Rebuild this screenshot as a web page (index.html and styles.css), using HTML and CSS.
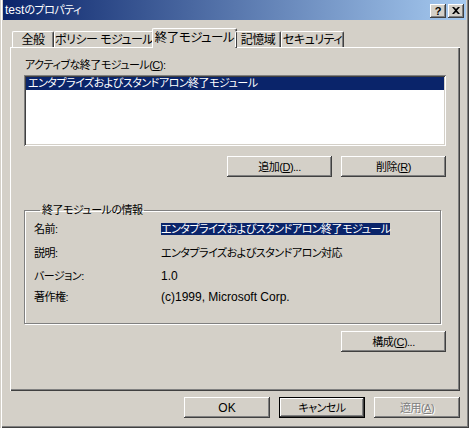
FILE: index.html
```html
<!DOCTYPE html>
<html>
<head>
<meta charset="utf-8">
<title>testのプロパティ</title>
<link rel="stylesheet" href="styles.css">
</head>
<body>
<div class="window">
  <div class="titlebar">
    <span class="title"><span class="en">test</span>のプロパティ</span>
    <div class="caption-btns">
      <span class="cap-btn help">?</span>
      <span class="cap-btn close">
        <svg width="8" height="7" viewBox="0 0 8 7"><path d="M0 0h2l2 2 2-2h2L5 3.5 8 7H6L4 5 2 7H0l3-3.5z" fill="#000"/></svg>
      </span>
    </div>
  </div>

  <div class="content">
    <div class="tabs">
      <div class="tab t1">全般</div>
      <div class="tab t2">ポリシー モジュール</div>
      <div class="tab t3 active">終了モジュール</div>
      <div class="tab t4">記憶域</div>
      <div class="tab t5">セキュリティ</div>
    </div>

    <div class="page">
      <div class="label">アクティブな終了モジュール(<u>C</u>):</div>
      <div class="listbox">
        <div class="item selected">エンタプライズおよびスタンドアロン終了モジュール</div>
      </div>
      <div class="btn-row">
        <span class="btn">追加(<u>D</u>)...</span>
        <span class="btn">削除(<u>R</u>)</span>
      </div>

      <fieldset class="group">
        <legend>終了モジュールの情報</legend>
        <div class="info">
          <span>名前:</span><span><span class="hl">エンタプライズおよびスタンドアロン終了モジュール</span></span>
          <span>説明:</span><span>エンタプライズおよびスタンドアロン対応</span>
          <span>バージョン:</span><span class="en">1.0</span>
          <span>著作権:</span><span class="en">(c)1999, Microsoft Corp.</span>
        </div>
      </fieldset>

      <div class="btn-row config">
        <span class="btn">構成(<u>C</u>)...</span>
      </div>
    </div>

    <div class="footer">
      <span class="btn wide en">OK</span>
      <span class="btn wide default">キャンセル</span>
      <span class="btn wide disabled">適用(<u>A</u>)</span>
    </div>
  </div>
</div>
</body>
</html>
```

FILE: styles.css
```css
html, body {
   margin: 0;
   padding: 0;
   background: #d4d0c8;
}

body {
   font-family: "Liberation Sans", "Noto Sans CJK JP", sans-serif;
   font-size: 11px;
   letter-spacing: -0.5px;
   line-height: 14px;
   color: #000;
   font-feature-settings: "palt";
   white-space: nowrap;
}

.en {
   font-size: 12px;
   letter-spacing: 0;
}

.window {
   width: 469px;
   height: 428px;
   box-sizing: border-box;
   padding: 0 3px 3px 3px;
   background: #d4d0c8;
   box-shadow: inset 1px 0 #d4d0c8, inset 2px 0 #fff,
               inset -1px -1px #404040, inset -2px -2px #808080;
}

.titlebar {
   height: 20px;
   display: flex;
   align-items: center;
   justify-content: space-between;
   padding: 0 2px 0 2px;
   background: linear-gradient(to right, #0a246a, #a6caf0);
}

.title {
   color: #fff;
}

.caption-btns {
   display: flex;
   gap: 2px;
   padding-top: 1px;
}

.cap-btn {
   width: 16px;
   height: 14px;
   display: flex;
   align-items: center;
   justify-content: center;
   background: #d4d0c8;
   box-shadow: inset -1px -1px #404040, inset 1px 1px #fff,
               inset -2px -2px #808080;
   font-family: "Liberation Sans", sans-serif;
   font-weight: bold;
   font-size: 11px;
   letter-spacing: 0;
}

.content {
   padding: 8px 6px 0 7px;
}

.tabs {
   height: 19px;
   display: flex;
   align-items: flex-end;
   padding-left: 2px;
   position: relative;
   z-index: 1;
}

.tab {
   height: 16px;
   box-sizing: border-box;
   text-align: center;
   line-height: 16px;
   border-top: 1px solid #fff;
   border-left: 1px solid #fff;
   border-right: 1px solid #404040;
   box-shadow: inset -1px 0 #808080;
   border-radius: 2px 2px 0 0;
   font-size: 12px;
}

.t1 { width: 42px; }
.t2 { width: 100px; }
.t4 { width: 46px; }
.t5 { width: 63px; }

.tab.active {
   width: 85px;
   height: 20px;
   margin: 0 -2px -1px -2px;
   line-height: 18px;
   background: #d4d0c8;
   font-size: 12.5px;
}

.page {
   height: 344px;
   box-sizing: border-box;
   padding: 11px 14px 0 14px;
   box-shadow: inset 1px 1px #fff, inset -1px -1px #404040,
               inset -2px -2px #808080;
}

.label {
   padding-left: 1px;
}

.listbox {
   margin-top: 3px;
   height: 71px;
   box-sizing: border-box;
   padding: 2px;
   background: #fff;
   box-shadow: inset 1px 1px #808080, inset -1px -1px #fff,
               inset 2px 2px #404040, inset -2px -2px #d4d0c8;
}

.item {
   height: 13px;
   line-height: 13px;
   padding-left: 2px;
}

.selected {
   background: #0a246a;
   color: #fff;
}

.btn-row {
   display: flex;
   justify-content: flex-end;
   gap: 9px;
   margin-top: 10px;
}

.btn {
   width: 105px;
   height: 21px;
   box-sizing: border-box;
   display: flex;
   align-items: center;
   justify-content: center;
   background: #d4d0c8;
   box-shadow: inset -1px -1px #404040, inset 1px 1px #fff,
               inset -2px -2px #808080;
}

.group {
   margin: 26px 0 0 0;
   padding: 5px 9px 0 9px;
   height: 121px;
   box-sizing: border-box;
   border: 1px solid #808080;
   box-shadow: inset 1px 1px #fff, 1px 1px #fff;
   width: 417px;
}

.group legend {
   padding: 0 2px;
   margin-left: 6px;
}

.info {
   display: grid;
   grid-template-columns: 127px auto;
   grid-template-rows: 24px 23px 21px 14px;
   align-items: start;
}

.hl {
   background: #0a246a;
   color: #fff;
}

.config {
   margin-top: 7px;
}

.footer {
   display: flex;
   justify-content: flex-end;
   gap: 9px;
   padding-top: 6px;
}

.btn.wide {
   width: 86px;
}

.btn.default {
   box-shadow: inset 0 0 0 1px #000, inset -2px -2px #404040,
               inset 2px 2px #fff, inset -3px -3px #808080;
}

.btn.disabled {
   color: #808080;
   text-shadow: 1px 1px #fff;
}
```
